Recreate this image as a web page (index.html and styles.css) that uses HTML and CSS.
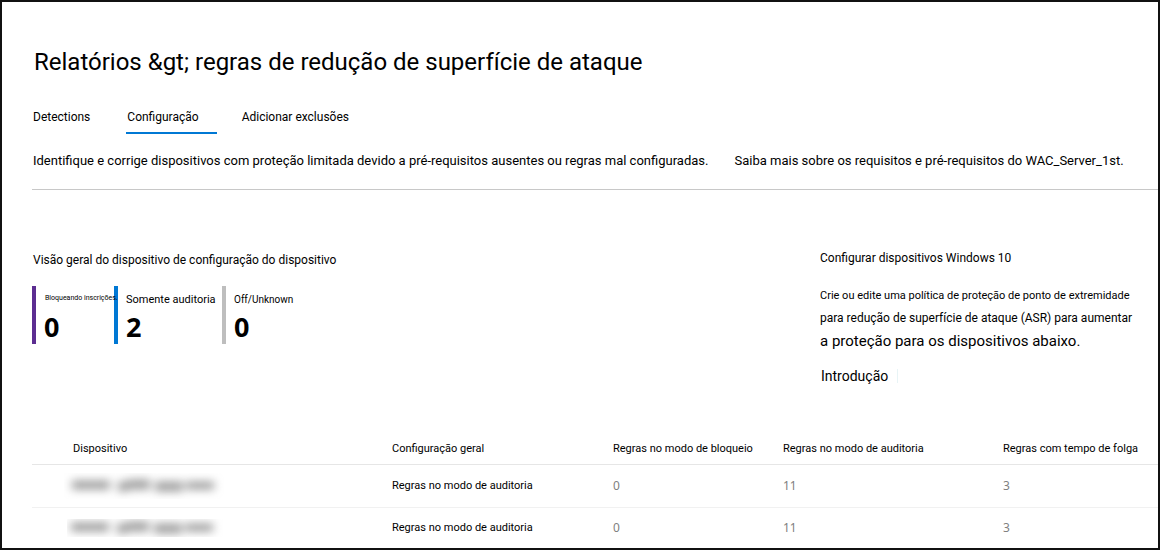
FILE: index.html
```html
<!DOCTYPE html>
<html lang="pt">
<head>
<meta charset="utf-8">
<title>Regras de redução de superfície de ataque</title>
<link rel="stylesheet" href="styles.css">
</head>
<body>
<main class="page">
  <h1 class="title">Relatórios &amp;gt; regras de redução de superfície de ataque</h1>
  <nav class="tabs" role="tablist">
    <button class="tab" role="tab" type="button">Detections</button>
    <button class="tab tab-active" role="tab" type="button" aria-selected="true">Configuração</button>
    <button class="tab" role="tab" type="button">Adicionar exclusões</button>
  </nav>
  <div class="intro">
    <p>Identifique e corrige dispositivos com proteção limitada devido a pré-requisitos ausentes ou regras mal configuradas.</p>
    <a href="#">Saiba mais sobre os requisitos e pré-requisitos do WAC_Server_1st.</a>
  </div>
  <div class="summary">
    <section class="overview">
      <h2 class="heading">Visão geral do dispositivo de configuração do dispositivo</h2>
      <div class="stats">
        <div class="stat stat-block"><span class="label label-tiny">Bloqueando inscrições.</span><strong>0</strong></div>
        <div class="stat stat-audit"><span class="label label-large">Somente auditoria</span><strong>2</strong></div>
        <div class="stat stat-off"><span class="label">Off/Unknown</span><strong>0</strong></div>
      </div>
    </section>
    <section class="setup">
      <h2 class="heading">Configurar dispositivos Windows 10</h2>
      <p class="setup-text"><span class="setup-small">Crie ou edite uma política de proteção de ponto de extremidade</span><br>para redução de superfície de ataque (ASR) para aumentar<br><span class="setup-large">a proteção para os dispositivos abaixo.</span></p>
      <a class="start" href="#">Introdução</a>
    </section>
  </div>
  <table class="devices">
    <colgroup><col class="col-device"><col class="col-config"><col class="col-block"><col class="col-audit"><col></colgroup>
    <thead>
      <tr><th>Dispositivo</th><th>Configuração geral</th><th>Regras no modo de bloqueio</th><th>Regras no modo de auditoria</th><th>Regras com tempo de folga</th></tr>
    </thead>
    <tbody>
      <tr>
        <td><svg class="redacted" viewBox="0 0 160 26" role="img" aria-label="Nome oculto"><defs><filter id="soft" x="-10%" y="-100%" width="120%" height="300%"><feGaussianBlur stdDeviation="5 4"/></filter></defs><g filter="url(#soft)" fill="#a8a8a8"><rect x="8" y="7" width="38" height="10"/><rect x="54" y="8" width="10" height="11"/><rect x="64" y="6" width="22" height="11"/><rect x="91" y="8" width="28" height="11"/><rect x="122" y="8" width="28" height="9"/></g></svg></td>
        <td>Regras no modo de auditoria</td><td class="count">0</td><td class="count">11</td><td class="count">3</td>
      </tr>
      <tr>
        <td><svg class="redacted redacted-short" viewBox="0 0 160 18" role="img" aria-label="Nome oculto"><g filter="url(#soft)" fill="#a8a8a8"><rect x="4" y="3" width="38" height="10"/><rect x="50" y="4" width="10" height="11"/><rect x="60" y="2" width="22" height="11"/><rect x="87" y="4" width="28" height="11"/><rect x="118" y="4" width="28" height="9"/></g></svg></td>
        <td>Regras no modo de auditoria</td><td class="count">0</td><td class="count">11</td><td class="count">3</td>
      </tr>
    </tbody>
  </table>
</main>
</body>
</html>
```
FILE: styles.css
```css
* { box-sizing: border-box; }
body { margin: 0; background: #fff; color: #000; font-family: Roboto, "Liberation Sans", sans-serif; font-size: 12px; line-height: 20px; }
h1, h2, p { margin: 0; font-weight: 400; }
a { color: inherit; text-decoration: none; }
.page { min-height: 100vh; padding: 44px 0 0 30px; border: 2px solid #111; }
.title { padding-left: 2px; font-size: 24px; line-height: 32px; }
.tabs { display: flex; gap: 24px; margin-top: 26px; }
.tab { padding: 3px 18px 5px 1px; border: 0; border-bottom: 2px solid transparent; background: none; color: inherit; font: inherit; cursor: pointer; }
.tab:first-child { margin-right: -6px; }
.tab-active { border-bottom-color: #0078d4; }
.intro { display: flex; gap: 26px; margin-top: 17px; padding: 0 0 18px 1px; border-bottom: 1px solid #c8c8c8; font-size: 13px; }
.summary { display: flex; justify-content: space-between; margin-top: 58px; }
.overview { padding: 2px 0 0 0; }
.heading { padding-left: 1px; font-size: 12px; line-height: 20px; }
.stats { display: flex; margin-top: 16px; }
.stat { display: flex; flex-direction: column; width: 82px; height: 58px; padding: 4px 0 0 8px; border-left: 4px solid #5c2d91; white-space: nowrap; }
.stat-block { z-index: 1; }
.stat-audit { width: 108px; border-color: #0078d4; }
.stat-off { border-color: #bebebe; }
.stat strong { font: 700 27px/34px "Open Sans", sans-serif; }
.label { font-size: 10px; line-height: 20px; }
.label-tiny { padding: 0 0 4px 1px; font-size: 7px; line-height: 16px; }
.label-large { font-size: 11px; }
.setup { width: 339px; }
.setup-text { margin-top: 16px; padding-left: 1px; font-size: 12px; line-height: 23px; white-space: nowrap; }
.setup-small { font-size: 11px; }
.setup-large { font-size: 15px; }
.start { display: inline-block; margin-top: 15px; padding: 0 9px 0 2px; border-right: 1px solid #e8f4f6; font-size: 14px; line-height: 14px; }
.devices { width: 100%; margin-top: 47px; border-collapse: collapse; table-layout: fixed; font-size: 11px; }
.devices th { height: 30px; padding: 0; border-bottom: 1px solid #e6e6e6; font-weight: 400; text-align: left; white-space: nowrap; }
.devices th:first-child { padding-left: 41px; }
.devices td { height: 43px; padding: 0; border-bottom: 1px solid #f1f1f1; }
.devices td:first-child { padding-left: 32px; }
.devices tr:last-child td { height: 40px; padding-top: 2px; border-bottom: 0; }
.col-device { width: 360px; }
.col-config { width: 221px; }
.col-block { width: 170px; }
.col-audit { width: 220px; }
.devices .count { color: #808080; font-family: "Noto Sans", sans-serif; font-size: 12px; }
.redacted { display: block; width: 160px; height: 26px; overflow: hidden; }
.redacted-short { height: 18px; margin-left: 3px; }
```
